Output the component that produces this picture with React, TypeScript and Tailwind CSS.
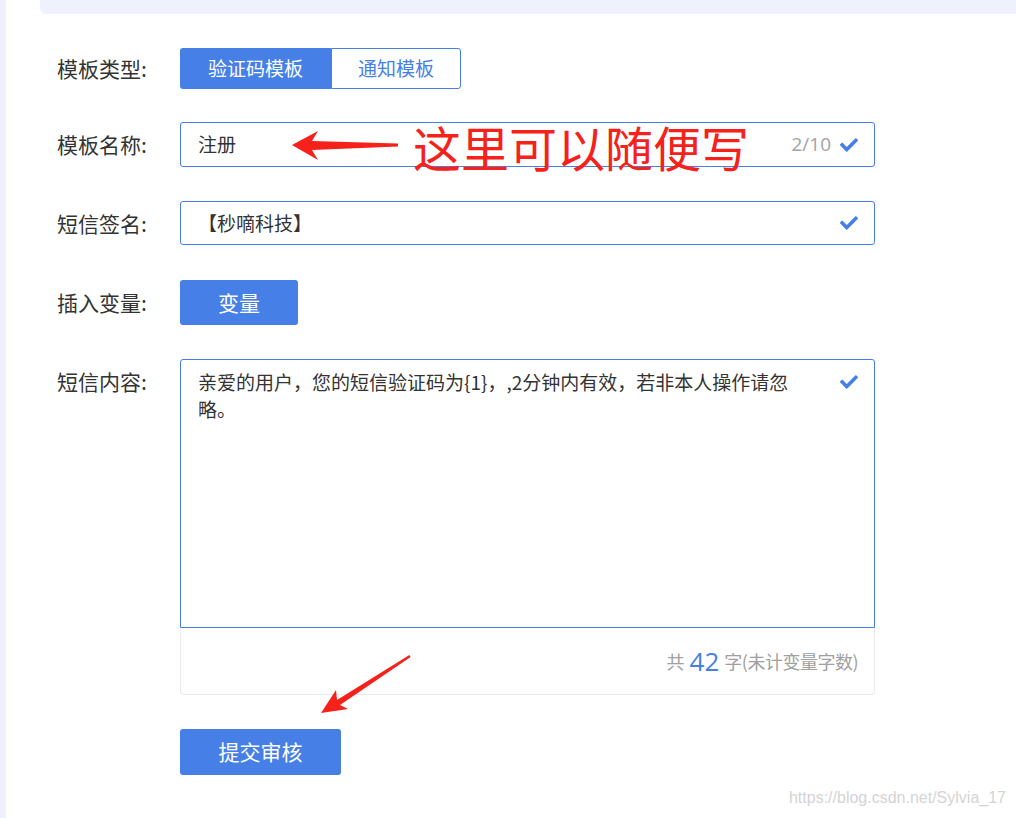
import React from 'react';
import { FaCheck } from 'react-icons/fa';

const font = { fontFamily: '"Noto Sans CJK SC", "Noto Sans", sans-serif' };

const Label: React.FC<{ text: string; h?: string }> = ({ text, h = 'h-[45px]' }) => (
  <div className={`w-[123px] shrink-0 flex items-center text-[21px] text-[#333] ${h}`}>{text}</div>
);

const Check = () => <FaCheck className="w-[18px] h-[18px] text-[#4680e6]" />;

export default function App() {
  return (
    <div className="relative w-[1016px] h-[818px] bg-white flex overflow-hidden" style={font}>
      {/* left sidebar edge */}
      <div className="w-[6px] h-full bg-[#eef1fb] shrink-0" />

      <div className="flex-1 flex flex-col">
        {/* top bar */}
        <div className="ml-[34px] h-[14px] bg-[#eef2fc] rounded-bl-[6px]" />

        <div className="pl-[51px] pt-[34px] flex flex-col">
          {/* template type */}
          <div className="flex items-start">
            <Label text="模板类型:" h="h-[41px]" />
            <div className="flex h-[41px]">
              <div className="w-[151px] h-full bg-[#4680e6] rounded-l-[3px] flex items-center justify-center text-white text-[19px]">
                验证码模板
              </div>
              <div className="w-[130px] h-full border border-[#4680e6] rounded-r-[3px] flex items-center justify-center text-[#4680e6] text-[19px]">
                通知模板
              </div>
            </div>
          </div>

          {/* template name */}
          <div className="flex items-start mt-[33px]">
            <Label text="模板名称:" />
            <div className="w-[695px] h-[45px] border border-[#4680e6] rounded-[3px] flex items-center pl-[17px] pr-[16px]">
              <span className="flex-1 text-[19px] text-[#333]">注册</span>
              <span className="text-[19px] text-[#a3a3a3] mr-[9px]" style={{ fontFamily: '"Open Sans", "Noto Sans", sans-serif' }}>2/10</span>
              <Check />
            </div>
          </div>

          {/* sms signature */}
          <div className="flex items-start mt-[34px]">
            <Label text="短信签名:" />
            <div className="w-[695px] h-[44px] border border-[#4680e6] rounded-[3px] flex items-center pl-[17px] pr-[16px]">
              <span className="flex-1 text-[19px] text-[#333]">【秒嘀科技】</span>
              <Check />
            </div>
          </div>

          {/* insert variable */}
          <div className="flex items-start mt-[34px]">
            <Label text="插入变量:" />
            <button className="w-[118px] h-[45px] bg-[#4680e6] rounded-[3px] text-white text-[21px] flex items-center justify-center">
              变量
            </button>
          </div>

          {/* sms content */}
          <div className="flex items-start mt-[34px]">
            <Label text="短信内容:" />
            <div className="w-[695px] flex flex-col">
              <div className="h-[269px] border border-[#4680e6] rounded-t-[3px] flex items-start pl-[17px] pr-[16px] pt-[8px]">
                <p className="flex-1 pr-[40px] text-[19px] leading-[27px] text-[#333]">
                  亲爱的用户，您的短信验证码为{'{1}'}，,2分钟内有效，若非本人操作请忽略。
                </p>
                <div className="h-[27px] flex items-center">
                  <Check />
                </div>
              </div>
              <div className="h-[67px] border border-t-0 border-[#ebebeb] rounded-b-[4px] flex items-center justify-end pr-[16px] text-[18px] text-[#a0a0a0]">
                <span>共</span>
                <span className="mx-[5px] text-[26px] leading-none text-[#4680e6]" style={{ fontFamily: '"Open Sans", "Noto Sans", sans-serif' }}>42</span>
                <span className="tracking-[-0.5px]">字(未计变量字数)</span>
              </div>
            </div>
          </div>

          {/* submit */}
          <div className="flex items-start mt-[34px]">
            <div className="w-[123px] shrink-0" />
            <button className="w-[161px] h-[46px] bg-[#4680e6] rounded-[3px] text-white text-[21px] flex items-center justify-center">
              提交审核
            </button>
          </div>
        </div>
      </div>

      {/* red annotations */}
      <svg className="absolute inset-0 pointer-events-none" width="1016" height="818">
        <polygon
          points="292,145 318,131 312,141 398,143.5 398,146.5 312,150 318,160"
          fill="#f5211a"
        />
        <polygon
          points="321,713 336,690 337,700 409.4,655 410.6,657 340,705 348,709"
          fill="#f5211a"
        />
      </svg>
      <div
        className="absolute left-[413px] top-[116px] text-[48px] leading-[60px] text-[#f5211a] pointer-events-none"
        style={font}
      >
        这里可以随便写
      </div>

      {/* watermark */}
      <div
        className="absolute right-[10px] bottom-[8px] text-[16px] text-[#d4d4d4]"
        style={{ fontFamily: '"Liberation Sans", Arial, sans-serif' }}
      >
        https://blog.csdn.net/Sylvia_17
      </div>
    </div>
  );
}
